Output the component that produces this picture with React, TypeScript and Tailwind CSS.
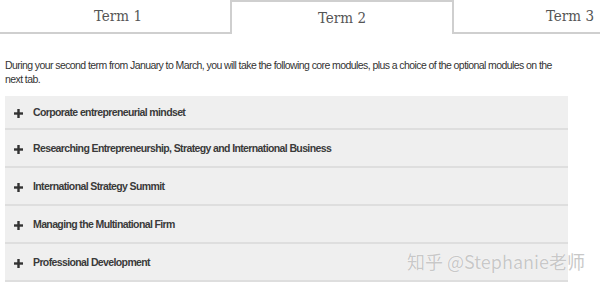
const modules = [
  'Corporate entrepreneurial mindset',
  'Researching Entrepreneurship, Strategy and International Business',
  'International Strategy Summit',
  'Managing the Multinational Firm',
  'Professional Development',
];

const tabFont = { fontFamily: '"DejaVu Serif Condensed", "DejaVu Serif", serif' };

function PlusIcon() {
  return (
    <svg width="9" height="9" viewBox="0 0 9 9" className="shrink-0">
      <rect x="3.3" y="0" width="2.4" height="9" fill="#333" />
      <rect x="0" y="3.3" width="9" height="2.4" fill="#333" />
    </svg>
  );
}

export default function App() {
  return (
    <div className="relative h-[283px] w-[600px] overflow-hidden bg-white font-['Liberation_Sans',Arial,sans-serif]">
      {/* Tabs */}
      <div className="flex h-[34px]">
        <div
          className="flex w-[232px] shrink-0 items-center justify-center border-b-2 border-r-2 border-[#cfcfcf] pl-[6px] text-[15px] text-[#555]"
          style={tabFont}
        >
          Term 1
        </div>
        <div
          className="flex w-[222px] shrink-0 items-center justify-center border-r-2 border-t-2 border-[#cfcfcf] pt-[1px] text-[15px] text-[#555]"
          style={tabFont}
        >
          Term 2
        </div>
        <div
          className="flex w-[222px] shrink-0 items-center justify-center border-b-2 border-[#cfcfcf] pl-[10px] text-[15px] text-[#555]"
          style={tabFont}
        >
          Term 3
        </div>
      </div>

      {/* Intro */}
      <p className="mt-[24px] w-[563px] pl-[5px] text-[10.5px] leading-[14px] tracking-[-0.58px] text-[#333]">
        During your second term from January to March, you will take the following core modules, plus a choice of the optional modules on the next tab.
      </p>

      {/* Accordion */}
      <div className="ml-[5px] mt-[10px] w-[563px]">
        {modules.map((m, i) => (
          <div
            key={m}
            className={`flex items-center gap-[10px] border-b-2 border-[#dedede] bg-[#efefef] pl-[9px] pt-[2px] text-[10.5px] font-bold tracking-[-0.62px] text-[#3a3a3a] ${
              i === 0 ? 'h-[34px]' : 'h-[38px]'
            }`}
          >
            <PlusIcon />
            <span>{m}</span>
          </div>
        ))}
      </div>

      {/* Watermark */}
      <div className="pointer-events-none absolute left-[407px] top-[250px] font-['Noto_Sans_CJK_SC',sans-serif] text-[18px] leading-[22px] text-[#c8c8c8] [text-shadow:0_0_1px_#fff,0_0_1px_#fff]">
        知乎 @Stephanie老师
      </div>
    </div>
  );
}
